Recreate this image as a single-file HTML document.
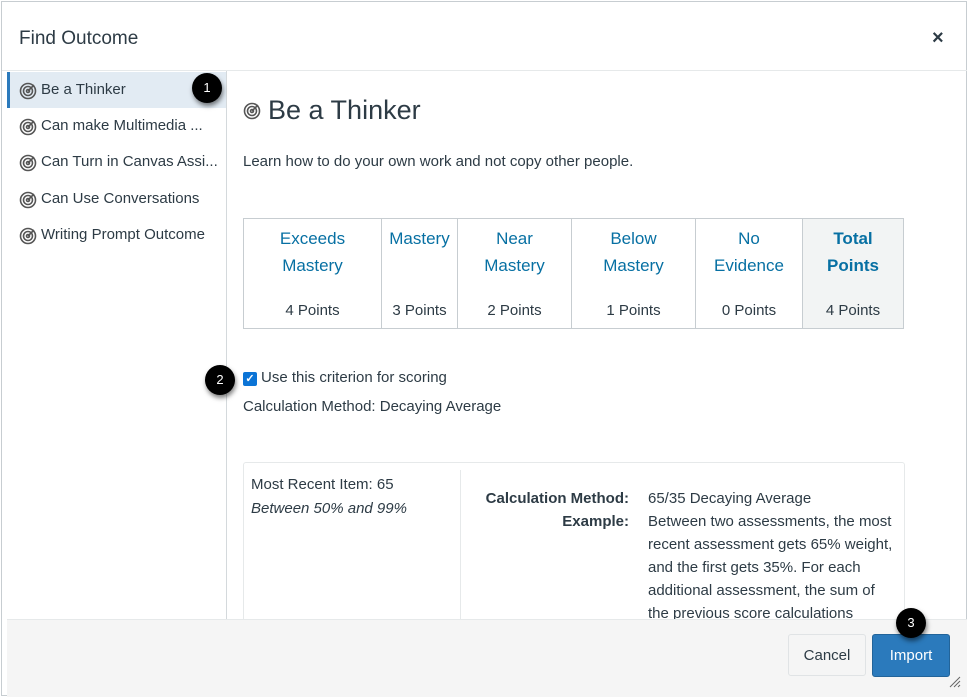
<!DOCTYPE html><html><head><style>
body{margin:0;width:970px;height:700px;background:#fff;font-family:"Liberation Sans",sans-serif;color:#2d3b45;position:relative;overflow:hidden}
.a{position:absolute}
.dlg{left:1px;top:1px;width:966px;height:695px;border:1px solid #c7cdd1;box-sizing:border-box}
.t{font-size:19px}
.side div{position:absolute;left:7px;width:219px;height:36px;font-size:15px;line-height:36px;padding-left:34px;box-sizing:border-box;color:#2d3b45;white-space:nowrap}
.ic{position:absolute;left:12px;top:10px}
td{border:1px solid #c7cdd1;text-align:center;vertical-align:top;font-size:17px;color:#0770a3;line-height:27px;padding:6px 4px 0}
td span{display:block;color:#2d3b45;font-size:15px;margin-top:18px;padding-bottom:4px}
.badge{width:30px;height:30px;border-radius:50%;background:#000;color:#fff;font-size:13px;text-align:center;line-height:30px;box-shadow:1px 3px 5px rgba(0,0,0,.5)}
</style></head><body>
<div class="a dlg"></div>
<div class="a t" style="left:19px;top:28px">Find Outcome</div>
<div class="a" style="left:932px;top:27px;font-size:20px;font-weight:bold;color:#2d3b45">×</div>
<div class="a" style="left:2px;top:70px;width:965px;height:1px;background:#e6e9ea"></div>
<div class="a" style="left:226px;top:71px;width:1px;height:548px;background:#d4d9dc"></div>
<div class="side">
<div style="top:72px;background:#e2ebf3;border-left:3px solid #2b7abc;padding-left:31px"><svg class="ic" style="left:9px" width="18" height="18" viewBox="0 0 18 18" fill="none" stroke="#555" stroke-width="1.6"><circle cx="9" cy="9" r="7.5"/><circle cx="9" cy="9" r="4.5"/><circle cx="9" cy="9" r="1.5"/><path d="M9 9L15 3"/></svg>Be a Thinker</div>
<div style="top:108px"><svg class="ic" width="18" height="18" viewBox="0 0 18 18" fill="none" stroke="#555" stroke-width="1.6"><circle cx="9" cy="9" r="7.5"/><circle cx="9" cy="9" r="4.5"/><circle cx="9" cy="9" r="1.5"/><path d="M9 9L15 3"/></svg>Can make Multimedia ...</div>
<div style="top:144px"><svg class="ic" width="18" height="18" viewBox="0 0 18 18" fill="none" stroke="#555" stroke-width="1.6"><circle cx="9" cy="9" r="7.5"/><circle cx="9" cy="9" r="4.5"/><circle cx="9" cy="9" r="1.5"/><path d="M9 9L15 3"/></svg>Can Turn in Canvas Assi...</div>
<div style="top:181px"><svg class="ic" width="18" height="18" viewBox="0 0 18 18" fill="none" stroke="#555" stroke-width="1.6"><circle cx="9" cy="9" r="7.5"/><circle cx="9" cy="9" r="4.5"/><circle cx="9" cy="9" r="1.5"/><path d="M9 9L15 3"/></svg>Can Use Conversations</div>
<div style="top:217px"><svg class="ic" width="18" height="18" viewBox="0 0 18 18" fill="none" stroke="#555" stroke-width="1.6"><circle cx="9" cy="9" r="7.5"/><circle cx="9" cy="9" r="4.5"/><circle cx="9" cy="9" r="1.5"/><path d="M9 9L15 3"/></svg>Writing Prompt Outcome</div>
</div>
<div class="a badge" style="left:192px;top:73px">1</div>
<svg class="a" style="left:243px;top:102px" width="18" height="18" viewBox="0 0 18 18" fill="none" stroke="#555" stroke-width="1.6"><circle cx="9" cy="9" r="7.5"/><circle cx="9" cy="9" r="4.5"/><circle cx="9" cy="9" r="1.5"/><path d="M9 9L15 3"/></svg>
<div class="a" style="left:268px;top:95px;font-size:27px">Be a Thinker</div>
<div class="a" style="left:243px;top:153px;font-size:15px">Learn how to do your own work and not copy other people.</div>
<table class="a" style="left:243px;top:218px;width:661px;height:111px;border-collapse:collapse">
<tr><td style="width:129px">Exceeds<br>Mastery<span>4 Points</span></td><td style="width:67px">Mastery<br>&nbsp;<span>3 Points</span></td><td style="width:105px">Near<br>Mastery<span>2 Points</span></td><td style="width:115px">Below<br>Mastery<span>1 Points</span></td><td style="width:98px">No<br>Evidence<span>0 Points</span></td><td style="background:#f2f4f4;font-weight:bold;color:#0770a3">Total<br>Points<span style="font-weight:normal">4 Points</span></td></tr></table>
<div class="a badge" style="left:205px;top:365px">2</div>
<div class="a" style="left:243px;top:372px;width:14px;height:14px;background:#0b74d6;border-radius:2px;color:#fff;font-size:11px;line-height:14px;text-align:center;font-weight:bold">✓</div>
<div class="a" style="left:261px;top:369px;font-size:15px">Use this criterion for scoring</div>
<div class="a" style="left:243px;top:398px;font-size:15px">Calculation Method: Decaying Average</div>
<div class="a" style="left:243px;top:462px;width:660px;height:170px;border:1px solid #e6e9ea;border-radius:3px"></div>
<div class="a" style="left:460px;top:470px;width:1px;height:150px;background:#e6e9ea"></div>
<div class="a" style="left:251px;top:473px;font-size:15px;line-height:24px">Most Recent Item: 65<br><i>Between 50% and 99%</i></div>
<div class="a" style="left:470px;top:487px;width:159px;font-size:15px;line-height:23px;text-align:right;font-weight:bold">Calculation Method:<br>Example:</div>
<div class="a" style="left:648px;top:487px;width:250px;font-size:15px;line-height:23px">65/35 Decaying Average<br>Between two assessments, the most recent assessment gets 65% weight, and the first gets 35%. For each additional assessment, the sum of the previous score calculations</div>
<div class="a" style="left:7px;top:619px;width:960px;height:77px;background:#f5f5f5;border-top:1px solid #e6e9ea"></div>
<div class="a" style="left:788px;top:634px;width:78px;height:42px;background:#f5f5f5;border:1px solid #e0e3e5;border-radius:3px;font-size:15px;line-height:42px;text-align:center;box-sizing:border-box">Cancel</div>
<div class="a" style="left:872px;top:634px;width:78px;height:43px;background:#2b7abc;border:1px solid #22649a;border-radius:3px;color:#fff;font-size:15px;line-height:42px;text-align:center;box-sizing:border-box">Import</div>
<div class="a badge" style="left:896px;top:608px">3</div>
<svg class="a" style="left:948px;top:675px" width="14" height="14" stroke="#666"><path d="M2 12L12 2M6 12L12 6M10 12L12 10"/></svg>
</body></html>
